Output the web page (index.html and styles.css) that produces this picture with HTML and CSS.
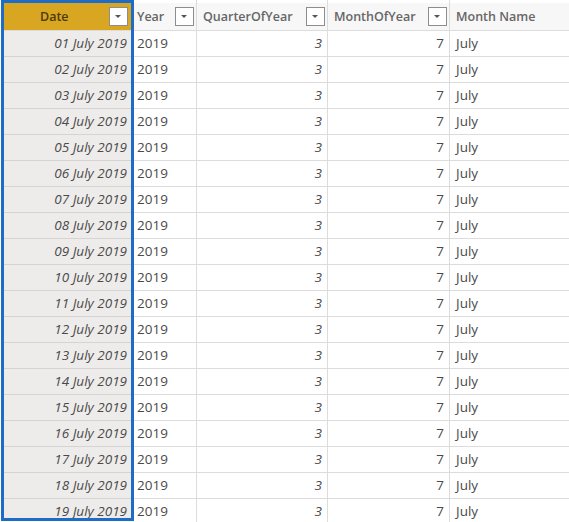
FILE: index.html
```html
<!DOCTYPE html>
<html lang="en">
  <head>
    <meta charset="UTF-8" />
    <meta name="viewport" content="width=device-width, initial-scale=1.0" />
    <title>Date table</title>
    <link rel="stylesheet" href="styles.css">
  </head>
  <body>
    <div class="grid">
      <div class="col col-date">
        <div class="head"><span class="label">Date</span><span class="drop"></span></div>
      </div>
      <div class="col col-year">
        <div class="head"><span class="label">Year</span><span class="drop"></span></div>
      </div>
      <div class="col col-quarter">
        <div class="head"><span class="label">QuarterOfYear</span><span class="drop"></span></div>
      </div>
      <div class="col col-month">
        <div class="head"><span class="label">MonthOfYear</span><span class="drop"></span></div>
      </div>
      <div class="col col-name">
        <div class="head"><span class="label">Month Name</span><span class="drop"></span></div>
      </div>
    </div>
    <script>
      const $ = query => document.querySelector(query)
      const cell = (col, text, cls) => {
        let div = document.createElement('div')
        div.className = 'cell ' + cls
        div.textContent = text
        $(col).appendChild(div)
      }
      for (let i = 1; i <= 19; i++) {
        let day = i < 10 ? '0' + i : '' + i
        cell('.col-date', day + ' July 2019', 'right italic')
        cell('.col-year', '2019', 'left')
        cell('.col-quarter', '3', 'right italic')
        cell('.col-month', '7', 'right')
        cell('.col-name', 'July', 'left')
      }
    </script>
  </body>
</html>
```

FILE: styles.css
```css
:root {
  --Line: #dcdcdc;
}
* {
  padding: 0;
  margin: 0;
  box-sizing: border-box;
}
body {
  width: 569px;
  height: 522px;
  overflow: hidden;
  background-color: #fff;
  font-family: "Open Sans", "Liberation Sans", sans-serif;
  color: #4a4a4a;
}
.grid {
  display: flex;
  height: 522px;
  padding-left: 1px;
}
.col {
  display: flex;
  flex-direction: column;
  flex-shrink: 0;
  padding-top: 3px;
  border-right: 1px solid var(--Line);
  overflow: hidden;
}
.col-date {
  width: 133px;
  height: 521px;
  padding-top: 0;
  border: 3px solid #1d6cc6;
  background-color: #eeeceb;
}
.col-year {
  width: 63px;
}
.col-quarter {
  width: 131px;
}
.col-month {
  width: 122px;
}
.col-name {
  width: 140px;
  border-right: none;
}
.head {
  display: flex;
  align-items: center;
  justify-content: space-between;
  flex-shrink: 0;
  height: 28px;
  padding: 0 2px 0 6px;
  border-bottom: 1px solid var(--Line);
  background-color: #f7f7f7;
  font-size: 12.5px;
  font-weight: 600;
  color: #666;
}
.col-date .head {
  padding: 0 3px 0 36px;
  background-color: #d8a620;
  color: #4d3b0e;
}
.col-year .head {
  padding-left: 3px;
}
.drop {
  position: relative;
  width: 19px;
  height: 19px;
  border: 1px solid #8d8d8d;
  background-color: #fff;
}
.drop::after {
  content: '';
  position: absolute;
  left: 5px;
  top: 7px;
  border-left: 3.5px solid transparent;
  border-right: 3.5px solid transparent;
  border-top: 3.5px solid #555;
}
.cell {
  flex-shrink: 0;
  height: 26px;
  line-height: 25px;
  border-bottom: 1px solid var(--Line);
  font-size: 13.5px;
  white-space: nowrap;
}
.col-date .cell {
  border-bottom-color: #d6d4d3;
}
.right {
  text-align: right;
  padding-right: 5px;
}
.col-date .right {
  padding-right: 4px;
}
.left {
  padding-left: 3px;
}
.col-name .left {
  padding-left: 6px;
}
.italic {
  font-style: italic;
}
```
